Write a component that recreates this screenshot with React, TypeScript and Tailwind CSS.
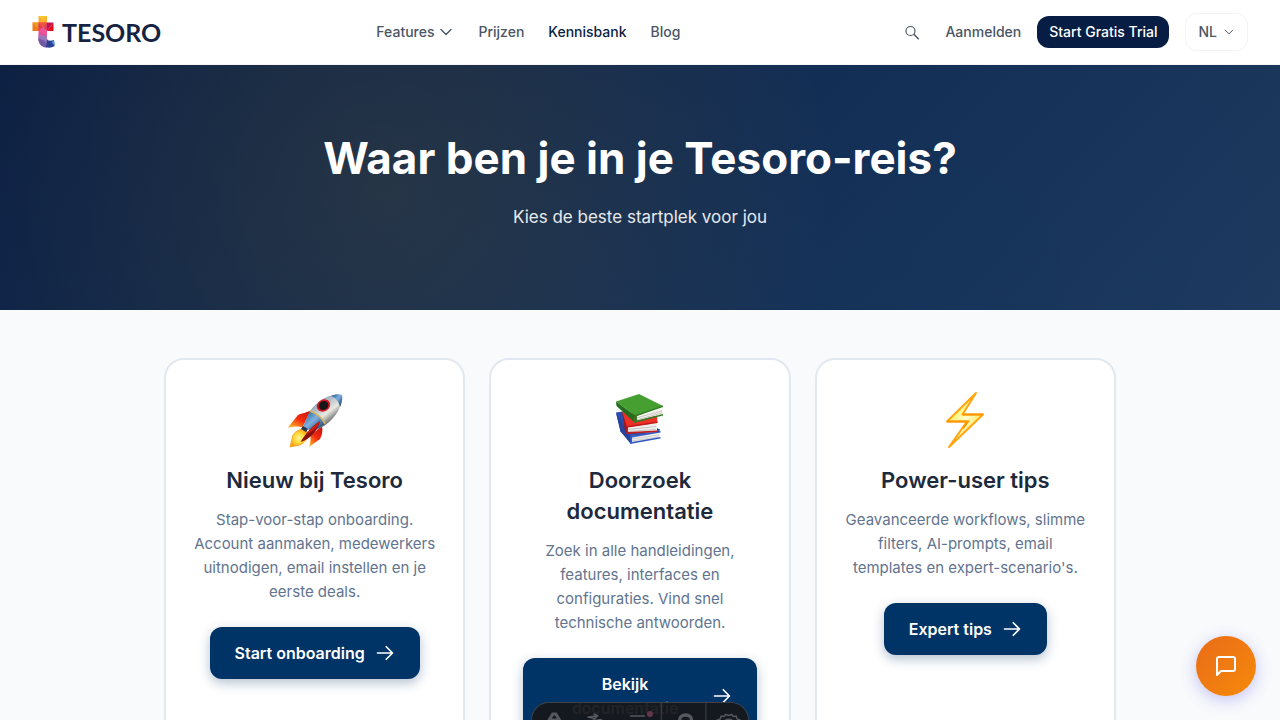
import type { ReactNode } from "react";

function Logo() {
  return (
    <svg viewBox="0 0 24 34" className="h-[34px] w-6 shrink-0" aria-hidden="true">
      <path d="M6.500 1h8.500v8H6.500z" fill="#fbb034" />
      <path d="M6.500 1H15l-4 4z" fill="#fdc62f" />
      <path d="M0.500 7.500h7V16h-7z" fill="#ef7d1a" />
      <path d="M0.500 7.500h7l-3 5z" fill="#f59a23" />
      <path d="M6.500 7.500H15V16H6.500z" fill="#df3d5c" />
      <path d="M6.500 7.500H15l-4 5z" fill="#ec5a3b" />
      <path d="M15 7.500h6.500L15 16z" fill="#c2134d" />
      <path d="M21.500 7.500V16H15z" fill="#e30d22" />
      <path d="M6.500 16H15v6l-8.500 4z" fill="#e0519d" />
      <path d="M11 12l4 4v4l-8.500-4z" fill="#f0559a" />
      <path d="M6.500 20l8.500 1v3c0 2 2 2 3 1l-3 7.500C9 32.500 6.500 28 6.500 24z" fill="#9a78bd" />
      <path d="M6.500 23l6.500 3 2 6.500C9 32.500 6.500 28 6.500 24z" fill="#7259a5" />
      <path d="M15 24c1 2.500 4 2 7 1l.5 6c-3 2-6 2-8.500 1z" fill="#2b4290" />
      <path d="M22 25l.8 5.500-3.300-3z" fill="#4a9be0" />
    </svg>
  );
}

function Chevron({ className }: { className: string }) {
  return (
    <svg viewBox="0 0 24 24" fill="none" stroke="currentColor" strokeLinecap="round" strokeLinejoin="round" className={className} aria-hidden="true">
      <path d="m19.5 8.25-7.5 7.5-7.5-7.5" />
    </svg>
  );
}

function Arrow() {
  return (
    <svg viewBox="0 0 24 24" fill="none" stroke="currentColor" strokeWidth="2" strokeLinecap="round" strokeLinejoin="round" className="size-5 shrink-0" aria-hidden="true">
      <path d="M13.5 4.5 21 12m0 0-7.5 7.5M21 12H3" />
    </svg>
  );
}

function Rocket() {
  return (
    <svg viewBox="0 0 60 60" className="size-[60px]" aria-hidden="true">
      <defs>
        <linearGradient id="body" x1="0.25" y1="0.2" x2="0.75" y2="0.8">
          <stop offset="0" stopColor="#7f97ad" />
          <stop offset="0.4" stopColor="#c9cdcf" />
          <stop offset="0.6" stopColor="#e8e8e2" />
          <stop offset="0.78" stopColor="#9d9f9c" />
          <stop offset="1" stopColor="#3c4043" />
        </linearGradient>
        <linearGradient id="blue" x1="0.1" y1="0.1" x2="0.9" y2="0.9">
          <stop offset="0" stopColor="#2e639d" />
          <stop offset="0.45" stopColor="#7fb0de" />
          <stop offset="1" stopColor="#1d3f6c" />
        </linearGradient>
        <linearGradient id="fin" x1="0.9" y1="0" x2="0.2" y2="1">
          <stop offset="0" stopColor="#c80f0f" />
          <stop offset="0.55" stopColor="#f32d0d" />
          <stop offset="1" stopColor="#ffae27" />
        </linearGradient>
        <radialGradient id="flame">
          <stop offset="0" stopColor="#fff59a" />
          <stop offset="0.6" stopColor="#ffd531" />
          <stop offset="1" stopColor="#f8a01c" />
        </radialGradient>
      </defs>
      <path d="M26 20c-4 3-9 3-13 5L2.700 37.700c5-1 9-2 15-.5z" fill="url(#fin)" />
      <path d="M37 36c1 5 0 9-2 13l-11 8c2-4 1-8 2-12z" fill="url(#fin)" />
      <path d="M17 39c-7 2-10 6-10 10l-2 8 5-1 5-1c6-3 8-7 8-13z" fill="url(#flame)" stroke="#f6a01c" strokeWidth="0.8" />
      <path d="M57 5C44 3 32 11 25 21l-7 16 9 4C38 39 50 29 55 17q3-7 2-12z" fill="url(#body)" />
      <path d="M46 6c4-2 8-2 11-1q1 5-2 12C54 12 51 8 46 6z" fill="url(#blue)" />
      <path d="M25 21l-7 16 9 4q7-2 13-7C37 27 32 23 25 21z" fill="url(#blue)" />
      <path d="M25 21q11 4 15 13" fill="none" stroke="#d9b95c" strokeWidth="1.400" />
      <path d="M35 31c-8 5-14 12-19.500 21C25 49 32 42 35 31z" fill="#8b1010" />
      <path d="M35 31c-6 5-10 8-13 13 7-4 11-7 13-13z" fill="#d81c16" />
      <ellipse cx="38.500" cy="15.500" rx="7" ry="5.800" fill="#d61520" transform="rotate(-30 38.500 15.500)" />
      <ellipse cx="38.500" cy="15.500" rx="5" ry="4.400" fill="#15171b" transform="rotate(-30 38.500 15.500)" />
      <path d="M18 36l5 3-2 3-5-3z" fill="#24384a" />
    </svg>
  );
}

function Books() {
  return (
    <svg viewBox="0 0 60 60" className="size-[60px]" aria-hidden="true">
      <path d="M6 22.500l6-1 38 18-1 3-29 8-9.500-9z" fill="#2b4fae" />
      <path d="M6 22.500l4.500 19L20 53l1-5z" fill="#27429a" />
      <path d="M21 46l29-4v6l-29 5z" fill="#f1f0ed" />
      <path d="M21 49l28-4M21 51l28-4" stroke="#b9b6b5" strokeWidth="0.600" />
      <path d="M20 46l30.500-5v1.500L22 47.500v4.500l28.500-5v1.500L20 54z" fill="#3159c4" />
      <path d="M12 21.500l35 5 .5 6L17 38z" fill="#ee3128" />
      <path d="M12 21.500l3 19 3 2.500-1-6z" fill="#a81313" />
      <path d="M18 37l29-4v9l-29 1z" fill="#efeeeb" />
      <path d="M18 39.500l28-3M18 41.500l28-2" stroke="#aaa" strokeWidth="0.600" />
      <path d="M16.500 36l31-4.500V33L18 37.500V42l29.500-1.500V42l-31 2z" fill="#c31b1b" />
      <path d="M6 11.500L29 4l24 12-28 9.500z" fill="#459f31" />
      <path d="M6 11.500l19 14L24 32 6.500 16z" fill="#236d1d" />
      <path d="M26 26l27-8v6l-27 7z" fill="#f4f2ed" />
      <path d="M26 28l26-7M26 30l26-7" stroke="#aaa8a3" strokeWidth="0.600" />
      <path d="M25 25l28-9.500V17l-26 9v4.500l26-6.500v1.500L24 33z" fill="#2d7e22" />
    </svg>
  );
}

function Bolt() {
  return (
    <svg viewBox="0 0 60 60" className="size-[60px]" aria-hidden="true">
      <defs>
        <linearGradient id="bolt" x1="0" y1="0" x2="1" y2="1">
          <stop offset="0.2" stopColor="#fff250" />
          <stop offset="0.5" stopColor="#fffbc9" />
          <stop offset="0.8" stopColor="#ffe33b" />
        </linearGradient>
      </defs>
      <path d="M41 3L12 31.500h20L14 57l34-32.500H27.500z" fill="url(#bolt)" stroke="#ffa50f" strokeWidth="2" strokeLinejoin="round" />
      <path d="M12 31.500h21l-5 7M48 24.500H27.500" fill="none" stroke="#ff9700" strokeWidth="2" />
    </svg>
  );
}

function Card({ icon, title, text, action }: { icon: ReactNode; title: string; text: string; action: string }) {
  return (
    <article className="flex flex-col items-center rounded-[20px] border-2 border-slate-200 bg-white px-7 py-8 text-center">
      <div className="mb-[17px] flex h-14 items-center justify-center">{icon}</div>
      <h2 className="mb-3 max-w-[236px] text-[22px] leading-[31px] font-semibold text-slate-800">{title}</h2>
      <p className="mb-[23px] text-[15px] leading-6 text-slate-500">{text}</p>
      <a href="#" className="flex max-w-[234px] items-center gap-2.5 rounded-xl bg-[#003366] px-[25px] py-3.5 text-base leading-6 font-semibold text-white shadow-[0_4px_12px_rgba(0,51,102,0.3)]">
        <span>{action}</span>
        <Arrow />
      </a>
    </article>
  );
}

function Toolbar() {
  return (
    <div className="fixed bottom-0 left-1/2 flex h-[18px] w-[218px] -translate-x-1/2 overflow-hidden rounded-t-[22px] border border-b-0 border-[#3e434b] bg-[#15171b]/95 text-[#55585e]">
      <svg viewBox="0 0 218 18" className="h-[18px] w-full shrink-0" fill="none" stroke="currentColor" aria-hidden="true">
        <path d="M16 19l5-8h3l5 8M19 17h7" strokeWidth="3" />
        <path d="M56 14l15 3M57 14l8-1-2-2M62 11l5 2M61 18l5-5" strokeWidth="1.500" />
        <path d="M99 13h15" strokeWidth="1.500" />
        <circle cx="119" cy="11" r="3" fill="#65354a" stroke="none" />
        <path d="M130.500 0v18M175.500 0v18" stroke="#3e434b" />
        <path d="M149 19v-2a6 5 0 0 1 12 0v2" strokeWidth="3.500" />
        <path d="M187 20v-3l3-1 1-3 3 .5 1.500-2 3 1 3-1 1.500 2 3-.5 1 3 3 1v3M193 20a6 6 0 0 1 11 0" strokeWidth="1.500" />
      </svg>
    </div>
  );
}

export default function App() {
  return (
    <div className="h-screen overflow-hidden bg-[#f8fafc] font-['Inter',sans-serif]">
      <header className="flex h-[65px] items-center justify-between border-b border-gray-100 bg-white px-8 text-sm font-medium text-gray-600">
        <a href="#" aria-label="Tesoro" className="flex items-center gap-1.5">
          <Logo />
          <span className="font-['Lato',sans-serif] text-[25px] leading-8 font-bold text-[#172342]">TESORO</span>
        </a>
        <nav className="flex items-center gap-6">
          <button type="button" className="flex items-center gap-1">
            Features
            <Chevron className="size-4 stroke-2" />
          </button>
          <a href="#">Prijzen</a>
          <a href="#" className="text-[#0a1f44]">Kennisbank</a>
          <a href="#">Blog</a>
        </nav>
        <div className="flex items-center justify-end gap-4">
          <button type="button" aria-label="Zoeken" className="p-2">
            <svg viewBox="0 0 18 18" fill="none" stroke="currentColor" strokeWidth="1.200" className="size-[18px]" aria-hidden="true">
              <circle cx="7.500" cy="8" r="4.500" />
              <path d="m10.800 11.300 5 5" strokeWidth="1.500" />
            </svg>
          </button>
          <a href="#">Aanmelden</a>
          <a href="#" className="rounded-xl bg-[#071d43] px-3 py-1.5 text-white">Start Gratis Trial</a>
          <button type="button" className="flex h-[38px] items-center gap-1.5 rounded-xl border border-gray-100 px-3">
            NL
            <Chevron className="size-3 stroke-2" />
          </button>
        </div>
      </header>

      <section className="h-[245px] bg-[radial-gradient(circle_at_30%_50%,rgba(255,184,0,0.09),transparent_50%),radial-gradient(circle_at_70%_80%,rgba(0,51,102,0.15),transparent_50%),linear-gradient(135deg,#0a1f44_0%,#1e3a5f_100%)] px-6 pt-16 text-center">
        <h1 className="text-[44px] leading-[58px] font-bold text-white">Waar ben je in je Tesoro-reis?</h1>
        <p className="mt-4 text-[17px] leading-7 text-white/90">Kies de beste startplek voor jou</p>
      </section>

      <main className="mx-auto grid max-w-[1000px] grid-cols-3 gap-6 px-6 py-12">
        <Card
          icon={<Rocket />}
          title="Nieuw bij Tesoro"
          text="Stap-voor-stap onboarding. Account aanmaken, medewerkers uitnodigen, email instellen en je eerste deals."
          action="Start onboarding"
        />
        <Card
          icon={<Books />}
          title="Doorzoek documentatie"
          text="Zoek in alle handleidingen, features, interfaces en configuraties. Vind snel technische antwoorden."
          action="Bekijk documentatie"
        />
        <Card
          icon={<Bolt />}
          title="Power-user tips"
          text="Geavanceerde workflows, slimme filters, AI-prompts, email templates en expert-scenario's."
          action="Expert tips"
        />
      </main>

      <button type="button" aria-label="Chat openen" className="fixed right-6 bottom-6 flex size-[60px] items-center justify-center rounded-full bg-linear-to-br from-[#ea6b18] to-[#f58a07] text-white shadow-[0_4px_16px_rgba(79,70,229,0.3)]">
        <svg viewBox="0 0 24 24" fill="none" stroke="currentColor" strokeWidth="2" strokeLinecap="round" strokeLinejoin="round" className="size-6" aria-hidden="true">
          <path d="M21 15a2 2 0 0 1-2 2H7l-4 4V5a2 2 0 0 1 2-2h14a2 2 0 0 1 2 2z" />
        </svg>
      </button>
      <Toolbar />
    </div>
  );
}
